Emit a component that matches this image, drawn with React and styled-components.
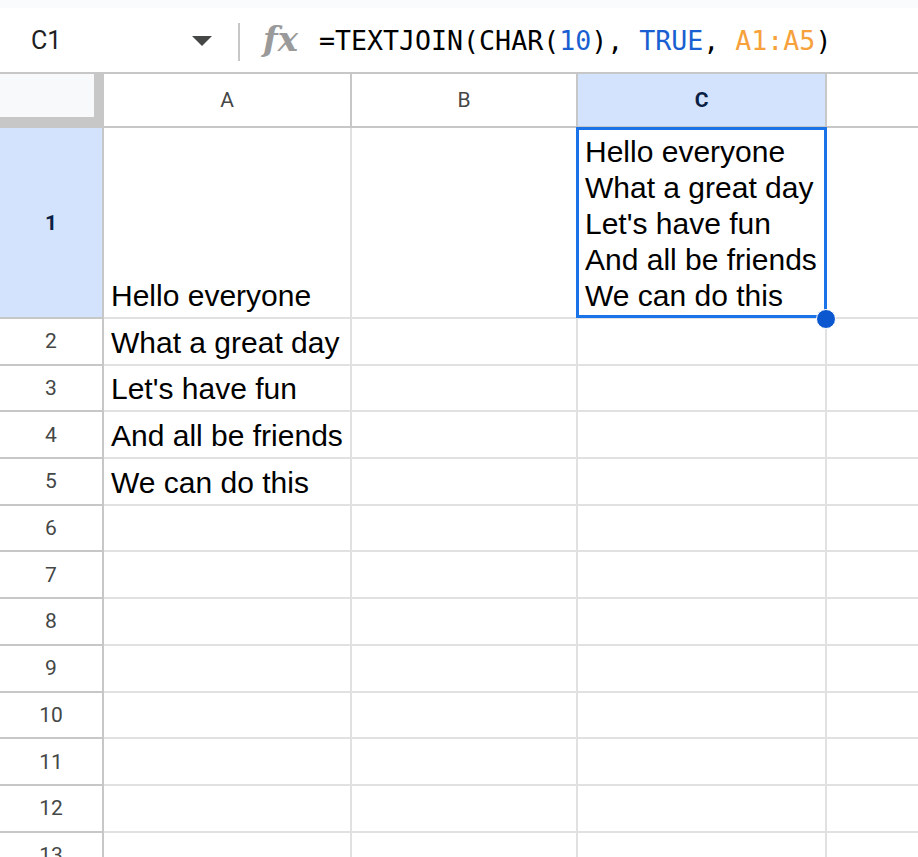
import styled, { createGlobalStyle } from 'styled-components'

const GlobalStyle = createGlobalStyle`
  html, body {
    margin: 0;
    padding: 0;
    background: #fff;
    overflow: hidden;
  }
  body {
    font-family: Roboto, "Liberation Sans", Arial, sans-serif;
  }
  * {
    box-sizing: border-box;
  }
`

const Page = styled.div`
  width: 918px;
  height: 857px;
  overflow: hidden;
  background: #fff;
`

const TopStrip = styled.div`
  height: 8px;
  background: #f9fbfd;
`

const FormulaBar = styled.div`
  height: 66px;
  display: flex;
  align-items: center;
  border-bottom: 2px solid #c7c7c7;
  background: #fff;
`

const NameBox = styled.div`
  width: 238px;
  display: flex;
  align-items: center;
  justify-content: space-between;
  padding: 0 26px 0 31px;
  font-size: 25px;
  color: #1f1f1f;
`

const Caret = styled.span`
  width: 0;
  height: 0;
  border-left: 10px solid transparent;
  border-right: 10px solid transparent;
  border-top: 10px solid #444746;
  margin-top: 2px;
`

const Divider = styled.div`
  width: 2px;
  height: 38px;
  margin-top: 4px;
  background: #c7c7c7;
`

const FxIcon = styled.span`
  width: 79px;
  padding-left: 23px;
  font-family: "DejaVu Serif", "Liberation Serif", serif;
  font-style: italic;
  font-weight: 700;
  font-size: 34px;
  color: #9a9a9a;
  line-height: 1;
  margin-top: -2px;
`

const Formula = styled.div`
  font-family: "DejaVu Sans Mono", "Liberation Mono", monospace;
  font-size: 26.6px;
  color: #000;
  white-space: pre;
`

const Token = styled.span`
  color: ${p => p.$color};
`

const Sheet = styled.div`
  display: grid;
  grid-template-columns: 104px 248px 226px 249px 200px;
  grid-template-rows: 54px 191px repeat(12, 46.7px);
  width: 1027px;
`

const Corner = styled.div`
  background: #f8f9fa;
  border-right: 10px solid #c7c7c7;
  border-bottom: 11px solid #c7c7c7;
`

const ColHeader = styled.div`
  display: flex;
  align-items: center;
  justify-content: center;
  border-right: 2px solid #c7c7c7;
  border-bottom: 2px solid #c7c7c7;
  background: ${p => (p.$active ? '#d3e3fd' : '#fff')};
  color: ${p => (p.$active ? '#0b1f44' : '#444746')};
  font-weight: ${p => (p.$active ? 700 : 400)};
  font-size: 21px;
`

const RowHeader = styled.div`
  display: flex;
  align-items: center;
  justify-content: center;
  border-right: 2px solid #c7c7c7;
  border-bottom: 2px solid #c7c7c7;
  background: ${p => (p.$active ? '#d3e3fd' : '#fff')};
  color: ${p => (p.$active ? '#0b1f44' : '#444746')};
  font-weight: ${p => (p.$active ? 700 : 400)};
  font-size: 21px;
`

const Cell = styled.div`
  position: relative;
  display: flex;
  align-items: flex-end;
  padding: 0 6px 3px 7px;
  border-right: 2px solid #e1e1e1;
  border-bottom: 2px solid #e1e1e1;
  font-family: "Liberation Sans", Arial, sans-serif;
  font-size: 30px;
  line-height: 36px;
  color: #000;
  white-space: pre-line;
`

const SelectionBox = styled.div`
  position: absolute;
  left: -2px;
  top: -1px;
  width: 251px;
  height: 191px;
  border: 3px solid #1a73e8;
  pointer-events: none;
`

const FillHandle = styled.div`
  position: absolute;
  left: 238px;
  top: 181px;
  width: 20px;
  height: 20px;
  border-radius: 50%;
  background: #0b57d0;
  border: 1.5px solid #fff;
  z-index: 2;
`

const lines = [
  'Hello everyone',
  'What a great day',
  "Let's have fun",
  'And all be friends',
  'We can do this'
]

const columns = ['A', 'B', 'C', 'D']

const App = () => {
  const rows = Array.from({ length: 13 }, (_, i) => i + 1)

  return (
    <Page>
      <GlobalStyle />
      <TopStrip />
      <FormulaBar>
        <NameBox>
          C1
          <Caret />
        </NameBox>
        <Divider />
        <FxIcon>fx</FxIcon>
        <Formula>
          =TEXTJOIN(CHAR(<Token $color="#1a5fd1">10</Token>), <Token $color="#1a5fd1">TRUE</Token>, <Token $color="#f6a13b">A1:A5</Token>)
        </Formula>
      </FormulaBar>
      <Sheet>
        <Corner />
        {columns.map(c => (
          <ColHeader key={c} $active={c === 'C'}>{c === 'D' ? '' : c}</ColHeader>
        ))}
        {rows.map(r => [
          <RowHeader key={`h${r}`} $active={r === 1}>{r}</RowHeader>,
          <Cell key={`a${r}`}>{lines[r - 1] || ''}</Cell>,
          <Cell key={`b${r}`} />,
          <Cell key={`c${r}`}>
            {r === 1 && lines.join('\n')}
            {r === 1 && <SelectionBox />}
            {r === 1 && <FillHandle />}
          </Cell>,
          <Cell key={`d${r}`} />
        ])}
      </Sheet>
    </Page>
  )
}

export default App
